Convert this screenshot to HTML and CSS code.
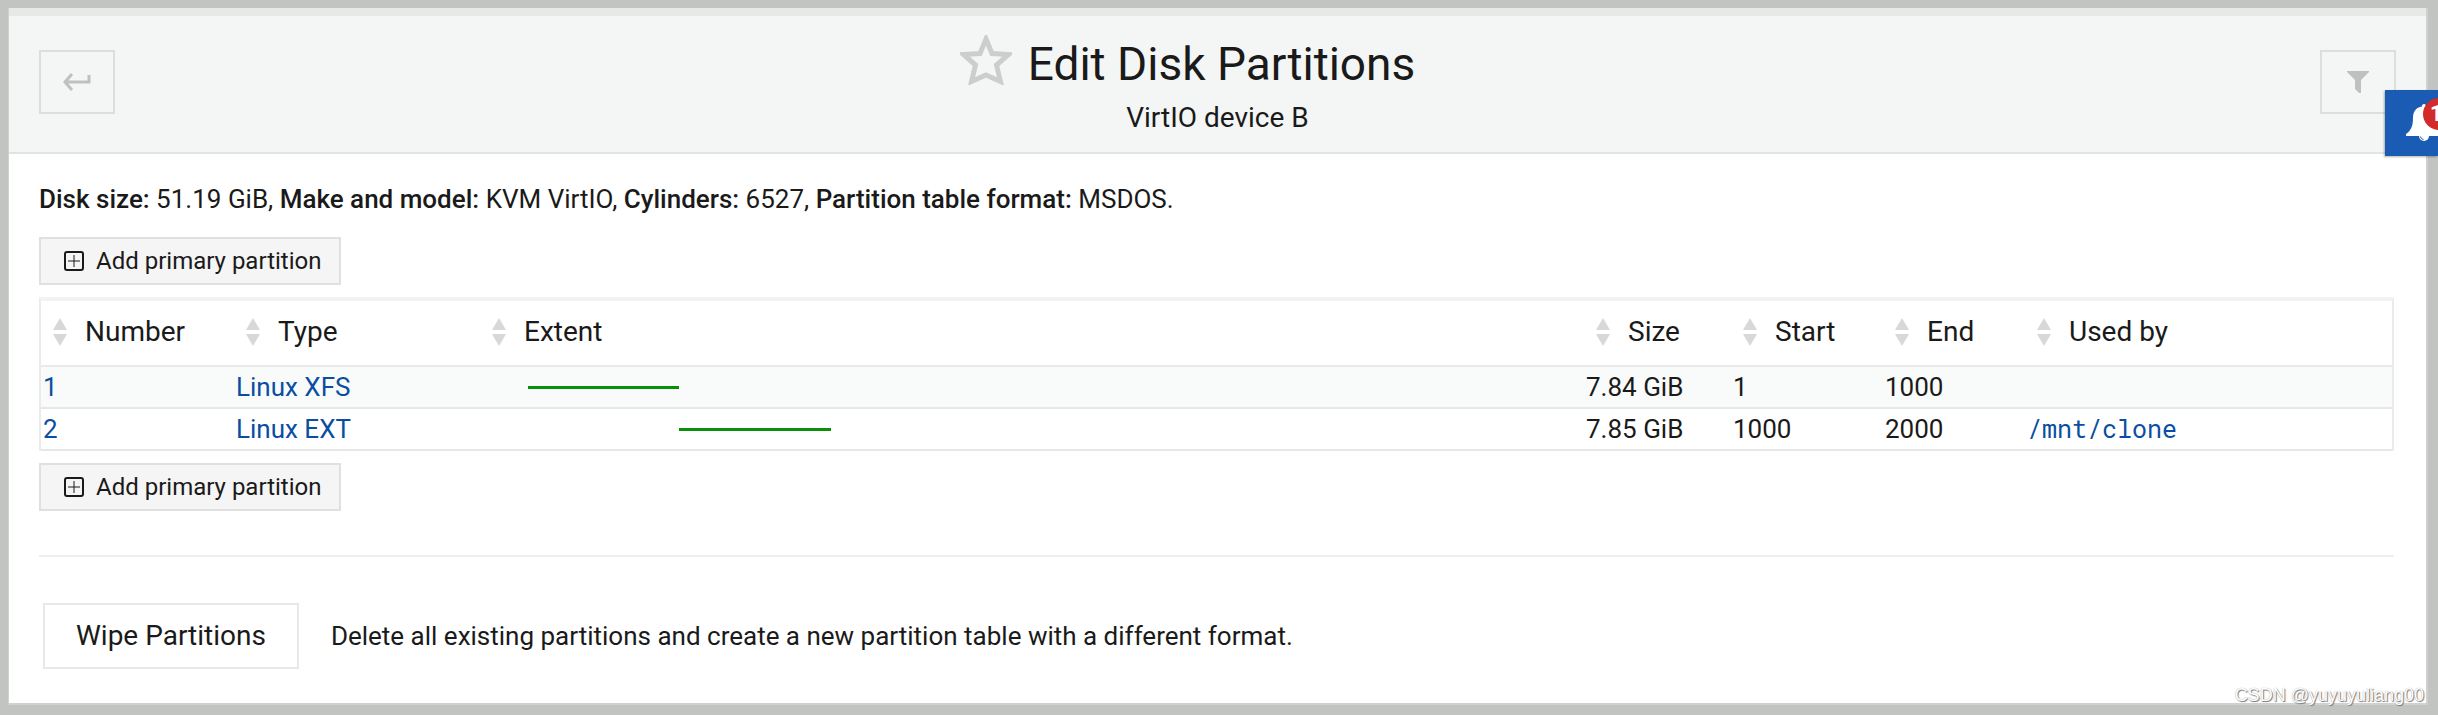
FILE: index.html
```html
<!DOCTYPE html>
<html lang="en">
<head>
    <meta charset="UTF-8">
    <meta name="viewport" content="width=device-width, initial-scale=1.0">
    <title>Edit Disk Partitions</title>
    <link rel="stylesheet" href="styles.css">
</head>
<body>
    <svg width="0" height="0" class="sprite" aria-hidden="true">
        <symbol id="sort" viewBox="0 0 14 28">
            <path d="M7 0L14 12H0zM0 16H14L7 28z" fill="currentColor"/>
        </symbol>
        <symbol id="plus" viewBox="0 0 20 20">
            <rect x="1" y="1" width="18" height="18" rx="2" fill="none" stroke="currentColor" stroke-width="2"/>
            <path d="M10 4v12M4 10h12" stroke="currentColor" stroke-width="1"/>
        </symbol>
    </svg>

    <main class="panel">
        <header class="panel-heading">
            <button type="button" class="icon-btn" aria-label="Return">
                <svg width="28" height="18" viewBox="0 0 28 18"><path d="M9 1L2 9l7 8M2 9h24V2" fill="none" stroke="currentColor" stroke-width="3"/></svg>
            </button>
            <div class="heading-text">
                <h1>
                    <svg class="star" width="52" height="50" viewBox="0 0 52 50"><path d="M26 4L32 18.500L48.500 19.500L36.500 30L40.500 46.500L26 40L11.500 46.500L15.500 30L3.500 19.500L20 18.500z" fill="none" stroke="currentColor" stroke-width="5"/></svg>
                    Edit Disk Partitions
                </h1>
                <p>VirtIO device B</p>
            </div>
            <button type="button" class="icon-btn" aria-label="Filter">
                <svg width="22" height="22" viewBox="0 0 22 22"><path d="M0 0h22v1L14 9v13h-2L8 18V9L0 1z" fill="currentColor"/></svg>
            </button>
        </header>

        <div class="panel-body">
            <p class="disk-info"><b>Disk size:</b> 51.19 GiB, <b>Make and model:</b> KVM VirtIO, <b>Cylinders:</b> 6527, <b>Partition table format:</b> MSDOS.</p>

            <button type="button" class="add-btn"><svg width="20" height="20"><use href="#plus"/></svg>Add primary partition</button>

            <table class="partitions">
                <colgroup>
                    <col class="col-number">
                    <col class="col-type">
                    <col class="col-extent">
                    <col class="col-size">
                    <col class="col-start">
                    <col class="col-end">
                    <col class="col-used">
                </colgroup>
                <thead>
                    <tr>
                        <th><svg width="14" height="28"><use href="#sort"/></svg>Number</th>
                        <th><svg width="14" height="28"><use href="#sort"/></svg>Type</th>
                        <th><svg width="14" height="28"><use href="#sort"/></svg>Extent</th>
                        <th><svg width="14" height="28"><use href="#sort"/></svg>Size</th>
                        <th><svg width="14" height="28"><use href="#sort"/></svg>Start</th>
                        <th><svg width="14" height="28"><use href="#sort"/></svg>End</th>
                        <th><svg width="14" height="28"><use href="#sort"/></svg>Used by</th>
                    </tr>
                </thead>
                <tbody>
                    <tr>
                        <td><a href="#">1</a></td>
                        <td><a href="#">Linux XFS</a></td>
                        <td><div class="extent"><span style="width: 15.3%"></span></div></td>
                        <td>7.84 GiB</td>
                        <td>1</td>
                        <td>1000</td>
                        <td></td>
                    </tr>
                    <tr>
                        <td><a href="#">2</a></td>
                        <td><a href="#">Linux EXT</a></td>
                        <td><div class="extent"><span style="margin-left: 15.3%; width: 15.3%"></span></div></td>
                        <td>7.85 GiB</td>
                        <td>1000</td>
                        <td>2000</td>
                        <td><a href="#" class="mount">/mnt/clone</a></td>
                    </tr>
                </tbody>
            </table>

            <button type="button" class="add-btn"><svg width="20" height="20"><use href="#plus"/></svg>Add primary partition</button>

            <hr>

            <div class="wipe">
                <button type="button" class="wipe-btn" id="wipe">Wipe Partitions</button>
                <label for="wipe">Delete all existing partitions and create a new partition table with a different format.</label>
            </div>
        </div>
    </main>

    <button type="button" class="notifications" aria-label="Notifications">
        <svg width="36" height="38" viewBox="0 0 36 38"><path d="M18 0c1.500 0 2 1 2 2.500 6 1 9 5 9 11 0 9 2 13 7 16.500V32H0v-2c5-3.500 7-7.500 7-16.500 0-6 3-10 9-11C16 1 16.500 0 18 0z" fill="#fff"/><path d="M13 32a5 5 0 0 0 10 0z" fill="#fff"/><path d="M14.500 32.500a3.500 3.500 0 0 0 3 3" fill="none" stroke="#1a5bb3"/></svg>
        <span class="badge">1</span>
    </button>
    <div class="watermark">CSDN @yuyuyuliang00</div>
</body>
</html>
```

FILE: styles.css
```css
* {
    box-sizing: border-box;
}
body {
    margin: 0;
    padding: 8px 10px 10px 8px;
    background-color: #c2c4c2;
    color: #1a1a1a;
    font-family: Roboto, sans-serif;
    font-size: 26px;
    line-height: 40px;
    min-height: 100vh;
    display: flex;
    position: relative;
    overflow: hidden;
}
h1, p {
    margin: 0;
    font-weight: normal;
}
button {
    font: inherit;
    color: inherit;
    border: 2px solid #e0e0e0;
    cursor: pointer;
}
a {
    color: #0a4ea2;
    text-decoration: none;
}
.sprite {
    position: absolute;
}
.panel {
    flex: 1;
    background-color: #fff;
    border: 1px solid #d0d0d0;
    border-width: 0 2px 2px 1px;
}
.panel-heading {
    display: flex;
    justify-content: space-between;
    align-items: flex-start;
    padding: 18px 30px 16px;
    height: 146px;
    background-color: #f4f6f5;
    border-top: 8px solid #e8e8e8;
    border-bottom: 2px solid #e3e3e3;
}
.icon-btn {
    display: flex;
    align-items: center;
    justify-content: center;
    width: 76px;
    height: 64px;
    margin-top: 16px;
    padding: 0;
    background: transparent;
    border-color: #dcdddc;
    color: #c0c0c0;
}
.heading-text {
    text-align: center;
}
h1 {
    display: flex;
    align-items: center;
    gap: 16px;
    padding-right: 60px;
    font-size: 46px;
    line-height: 60px;
}
.star {
    color: #cdcdcd;
    margin-top: -8px;
}
.heading-text p {
    font-size: 28px;
    line-height: 48px;
}
.panel-body {
    padding: 25px 32px 34px 30px;
}
.disk-info {
    margin-bottom: 18px;
}
.disk-info b {
    font-weight: 500;
}
.add-btn {
    display: flex;
    align-items: center;
    gap: 12px;
    height: 48px;
    padding: 0 18px 0 23px;
    background-color: #f5f5f5;
    font-size: 24px;
    line-height: 40px;
}
.partitions {
    width: 100%;
    margin: 12px 0;
    table-layout: fixed;
    border-collapse: separate;
    border-spacing: 0;
    border: 2px solid #ebebeb;
    border-top: 4px solid #f2f2f2;
    border-bottom: 0;
}
.col-number { width: 193px; }
.col-type { width: 246px; }
.col-size { width: 147px; }
.col-start { width: 152px; }
.col-end { width: 142px; }
.col-used { width: 367px; }
th {
    height: 66px;
    padding: 0 12px 2px;
    border-bottom: 2px solid #e9ebea;
    font-size: 28px;
    font-weight: normal;
    text-align: left;
}
th svg {
    margin: -4px 18px 0 0;
    vertical-align: middle;
    color: #d8d8d8;
}
td {
    height: 42px;
    padding: 0 2px;
    border-bottom: 2px solid #e6e8e7;
}
tbody tr:nth-child(odd) {
    background-color: #f9fbfa;
}
.extent {
    display: flex;
    width: 90%;
    margin-left: 46px;
}
.extent span {
    height: 3px;
    background-color: #0a8f0a;
}
.mount {
    font-family: "Roboto Mono", "DejaVu Sans Mono", monospace;
    font-size: 25px;
}
hr {
    margin: 44px 0 46px;
    border: 0;
    border-top: 2px solid #eee;
}
.wipe {
    display: flex;
    align-items: center;
    gap: 32px;
    padding-left: 4px;
}
.wipe-btn {
    height: 66px;
    padding: 0 31px;
    background-color: #fff;
    border-color: #e8e8e8;
    font-size: 28px;
}
.notifications {
    position: absolute;
    top: 90px;
    right: 0;
    width: 53px;
    height: 66px;
    padding: 0;
    border: 0;
    background-color: #1a5bb3;
    box-shadow: -1px 1px 2px rgba(0, 0, 0, 0.3);
    overflow: hidden;
}
.notifications svg {
    position: absolute;
    top: 14px;
    left: 21px;
}
.badge {
    position: absolute;
    top: 8px;
    left: 38px;
    width: 32px;
    height: 32px;
    padding-left: 7px;
    border-radius: 50%;
    background-color: #d32a2a;
    color: #fff;
    font-size: 22px;
    font-weight: bold;
    line-height: 32px;
    text-align: left;
}
.watermark {
    position: absolute;
    right: 14px;
    bottom: 5px;
    color: #fff;
    font-family: "Liberation Sans", Arial, sans-serif;
    font-size: 18px;
    line-height: 30px;
    text-shadow: 1px 1px 1px #777, 0 0 1px #999;
}
```
